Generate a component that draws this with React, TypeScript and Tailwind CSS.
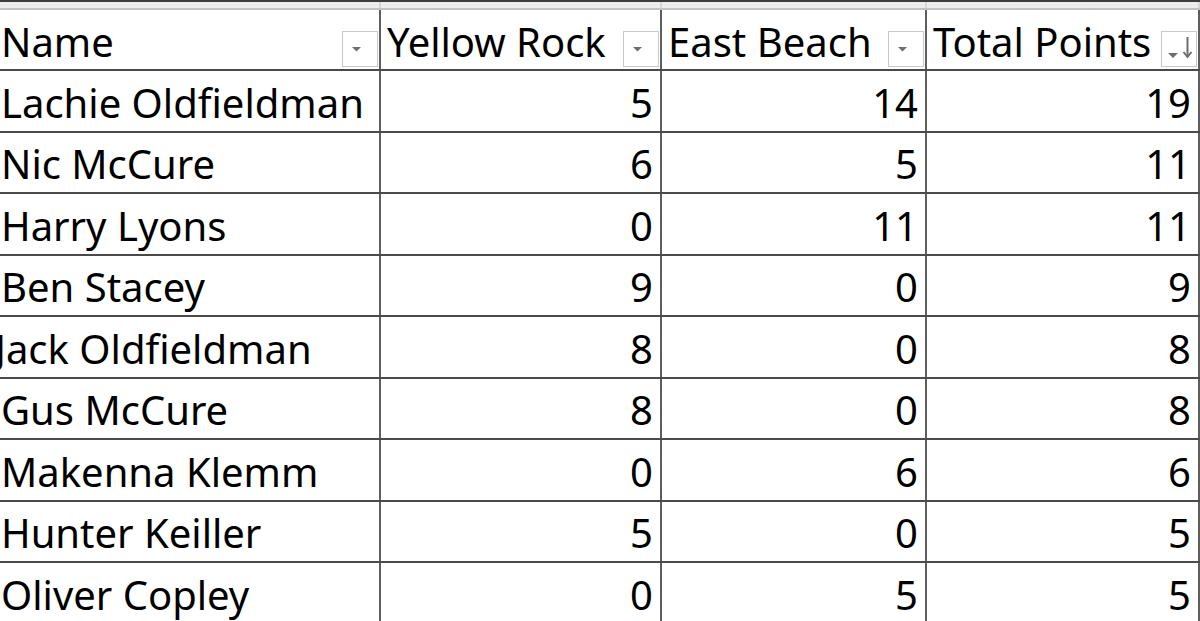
import React from "react";

const rows: [string, number, number, number][] = [
  ["Lachie Oldfieldman", 5, 14, 19],
  ["Nic McCure", 6, 5, 11],
  ["Harry Lyons", 0, 11, 11],
  ["Ben Stacey", 9, 0, 9],
  ["Jack Oldfieldman", 8, 0, 8],
  ["Gus McCure", 8, 0, 8],
  ["Makenna Klemm", 0, 6, 6],
  ["Hunter Keiller", 5, 0, 5],
  ["Oliver Copley", 0, 5, 5],
];

const font = { fontFamily: '"Noto Sans", "Open Sans", sans-serif' };

function FilterBtn({ sorted = false }: { sorted?: boolean }) {
  return (
    <div className="w-[36px] h-[36px] shrink-0 self-end mb-[2px] mr-[1px] border border-[#c9c9c9] bg-white flex items-center justify-center">
      {sorted ? (
        <svg width="34" height="34" viewBox="0 0 34 34">
          <path d="M6 21 L16 21 L11 26 Z" fill="#6e6e6e" />
          <path d="M25.5 5 L25.5 24" stroke="#6e6e6e" strokeWidth="2" />
          <path d="M21.5 20 L25.5 25 L29.5 20" stroke="#6e6e6e" strokeWidth="2" fill="none" />
        </svg>
      ) : (
        <svg width="34" height="34" viewBox="0 0 34 34">
          <path d="M9 15 L18 15 L13.5 19.5 Z" fill="#6e6e6e" />
        </svg>
      )}
    </div>
  );
}

const cols = "grid grid-cols-[381px_281px_265px_273px_1fr]";

export default function App() {
  return (
    <div className="w-[1200px] h-[621px] overflow-hidden bg-white text-black" style={font}>
      {/* top strip (row above) */}
      <div className={`${cols} h-[10px] border-t-2 border-b-2 border-t-[#3c3c3c] border-b-[#c2c2c2] bg-[#ececec]`}>
        <div className="border-r-2 border-[#d6d6d6]" />
        <div className="border-r-2 border-[#d6d6d6]" />
        <div className="border-r-2 border-[#d6d6d6]" />
        <div className="border-r-2 border-[#d6d6d6]" />
        <div />
      </div>
      {/* header */}
      <div className={`${cols} h-[61px] border-b-2 border-[#4a4a4a]`}>
        {["Name", "Yellow Rock", "East Beach", "Total Points"].map((h, i) => (
          <div key={h} className="flex border-r-2 border-[#5e5e5e]">
            <div className={`flex-1 self-center text-[40px] leading-none whitespace-nowrap pt-[4px] ${i === 0 ? "pl-[1px]" : "pl-[6px]"}`}>
              {h}
            </div>
            <FilterBtn sorted={i === 3} />
          </div>
        ))}
        <div />
      </div>
      {rows.map(([name, a, b, t]) => (
        <div key={name} className={`${cols} h-[61.5px] border-b-2 border-[#4a4a4a]`}>
          <div className="flex items-center border-r-2 border-[#5e5e5e] text-[40px] leading-none whitespace-nowrap pt-[4px]">
            <span className={name.startsWith("J") ? "-ml-[5px]" : "pl-[1px]"}>{name}</span>
          </div>
          {[a, b, t].map((v, i) => (
            <div key={i} className="flex items-center justify-end border-r-2 border-[#5e5e5e] text-[40px] leading-none pr-[7px] pt-[4px]">
              {v}
            </div>
          ))}
          <div />
        </div>
      ))}
    </div>
  );
}
